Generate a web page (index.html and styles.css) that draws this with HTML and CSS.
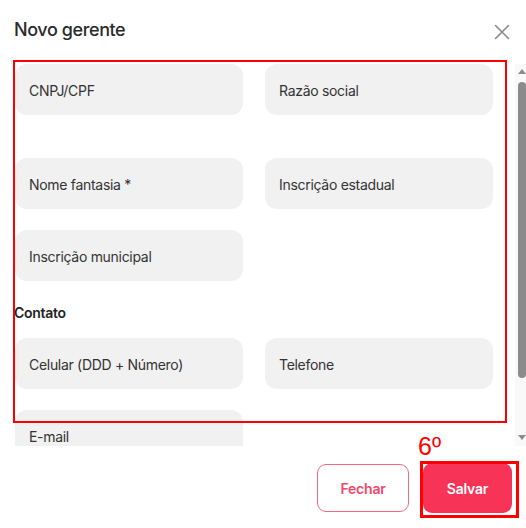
FILE: index.html
```html
<!DOCTYPE html>
<html lang="pt-BR">
<head>
<meta charset="utf-8">
<title>Novo gerente</title>
<link rel="stylesheet" href="styles.css">
</head>
<body>
<div class="dialog">
  <header class="header">
    <h1 class="title">Novo gerente</h1>
    <button class="close" aria-label="Fechar">
      <svg width="16" height="16" viewBox="0 0 16 16"><path d="M1.5 1.5 L14.5 14.5 M14.5 1.5 L1.5 14.5" stroke="#8a8a8a" stroke-width="1.6" fill="none" stroke-linecap="round"/></svg>
    </button>
  </header>
  <div class="main">
    <div class="scroll">
      <div class="content">
        <div class="grid first">
          <div class="field">CNPJ/CPF</div>
          <div class="field">Razão social</div>
        </div>
        <div class="grid">
          <div class="field">Nome fantasia *</div>
          <div class="field">Inscrição estadual</div>
          <div class="field">Inscrição municipal</div>
        </div>
        <h2 class="section">Contato</h2>
        <div class="grid">
          <div class="field">Celular (DDD + Número)</div>
          <div class="field">Telefone</div>
          <div class="field">E-mail</div>
        </div>
      </div>
    </div>
    <div class="scrollbar" aria-hidden="true">
      <span class="arrow arrow-up"></span>
      <span class="thumb"></span>
      <span class="arrow arrow-down"></span>
    </div>
  </div>
  <footer class="footer">
    <button class="btn btn-outline">Fechar</button>
    <button class="btn btn-primary">Salvar</button>
  </footer>
  <div class="mark mark-form"></div>
  <div class="mark mark-save"></div>
  <div class="mark-label">6º</div>
</div>
</body>
</html>
```

FILE: styles.css
```css
html, body {
  margin: 0;
  padding: 0;
  background: #ffffff;
}

.dialog {
  position: relative;
  width: 526px;
  height: 528px;
  display: flex;
  flex-direction: column;
  font-family: Inter, "Noto Sans", sans-serif;
  color: #2f2f2f;
  overflow: hidden;
}

.header {
  display: flex;
  justify-content: space-between;
  align-items: center;
  padding: 18px 16px 0 14px;
  height: 24px;
}

.title {
  margin: 0;
  font-size: 18px;
  line-height: 24px;
  font-weight: 500;
  letter-spacing: -0.4px;
  color: #2b2b2b;
}

.close {
  border: 0;
  background: none;
  padding: 0;
  width: 16px;
  height: 16px;
  margin-top: 4px;
  cursor: pointer;
}

.close svg {
  display: block;
}

.main {
  display: flex;
  margin-top: 22px;
  height: 382px;
}

.scroll {
  flex: 1;
  overflow: hidden;
  padding-left: 14px;
}

.scrollbar {
  width: 11px;
  background: #f9f9f9;
  display: flex;
  flex-direction: column;
  align-items: flex-end;
}

.arrow {
  width: 0;
  height: 0;
  border-left: 4px solid transparent;
  border-right: 4px solid transparent;
}

.arrow-up {
  margin-top: 5px;
  border-bottom: 5px solid #8b8b8b;
}

.arrow-down {
  margin-top: auto;
  margin-bottom: 6px;
  border-top: 5px solid #8b8b8b;
}

.thumb {
  margin-top: 8px;
  width: 8px;
  height: 296px;
  background: #8b8b8b;
  border-radius: 4px;
}

.content {
  width: 479px;
}

.grid {
  display: grid;
  grid-template-columns: 1fr 1fr;
  column-gap: 21px;
  row-gap: 21px;
}

.grid.first {
  margin-bottom: 43px;
}

.field {
  height: 51px;
  box-sizing: border-box;
  background: #f1f1f1;
  border-radius: 12px;
  margin-left: 1px;
  padding: 17px 14px 0 14px;
  font-size: 14px;
  line-height: 20px;
  letter-spacing: -0.3px;
  color: #333333;
}

.section {
  margin: 22px 0 15px 0;
  font-size: 14px;
  line-height: 20px;
  font-weight: 600;
  letter-spacing: -0.3px;
  color: #222222;
}

.footer {
  display: flex;
  justify-content: flex-end;
  align-items: center;
  gap: 14px;
  padding: 17px 14px 0 0;
}

.btn {
  font-family: Inter, "Noto Sans", sans-serif;
  font-size: 14px;
  font-weight: 600;
  letter-spacing: -0.2px;
  border-radius: 9px;
  cursor: pointer;
}

.btn-outline {
  width: 92px;
  height: 48px;
  background: #ffffff;
  border: 1px solid #f46a83;
  color: #f0486a;
}

.btn-primary {
  width: 89px;
  height: 50px;
  background: #f83358;
  border: 0;
  color: #ffffff;
}

.mark {
  position: absolute;
  box-sizing: border-box;
  border: 2px solid #ff0000;
  pointer-events: none;
}

.mark-form {
  left: 13px;
  top: 60px;
  width: 494px;
  height: 363px;
}

.mark-save {
  left: 420px;
  top: 461px;
  width: 99px;
  height: 57px;
  border-width: 3px;
}

.mark-label {
  position: absolute;
  left: 418px;
  top: 434px;
  font-family: "Liberation Sans", Arial, sans-serif;
  font-size: 25px;
  line-height: 25px;
  color: #ff0000;
}
```
